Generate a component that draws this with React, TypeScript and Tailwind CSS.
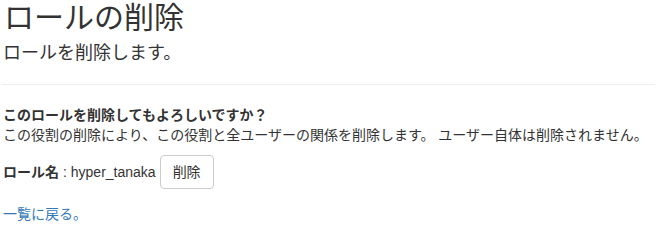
const font = "font-['Liberation_Sans','Noto_Sans_CJK_JP',sans-serif]"

export default function App() {
	return (
		<div className={`${font} text-[14px] leading-[20px] text-[#333] bg-white min-h-[239px] pl-[2px] pr-[2px]`}>
			<h1 className="pt-[1px] text-[30px] leading-[33px] font-normal pl-[2px]">ロールの削除</h1>
			<p className="mt-[9px] text-[18px] leading-[20px] pl-[1px]">ロールを削除します。</p>
			<hr className="mt-[21px] border-0 border-t border-[#eee]" />
			<div className="mt-[20px] pl-[1px]">
				<p>
					<strong className="font-bold">このロールを削除してもよろしいですか？</strong>
					<br />
					この役割の削除により、この役割と全ユーザーの関係を削除します。 ユーザー自体は削除されません。
				</p>
				<div className="mt-[10px] flex items-center">
					<span className="font-bold">ロール名</span>
					<span className="ml-[4px]">: hyper_tanaka</span>
					<button
						type="button"
						className="ml-[4px] h-[34px] px-[12px] border border-[#ccc] rounded-[4px] bg-white text-[14px] leading-[20px] text-[#333]"
					>
						削除
					</button>
				</div>
				<div className="mt-[15px]">
					<a href="#" className="text-[#337ab7] no-underline">
						一覧に戻る。
					</a>
				</div>
			</div>
		</div>
	)
}
